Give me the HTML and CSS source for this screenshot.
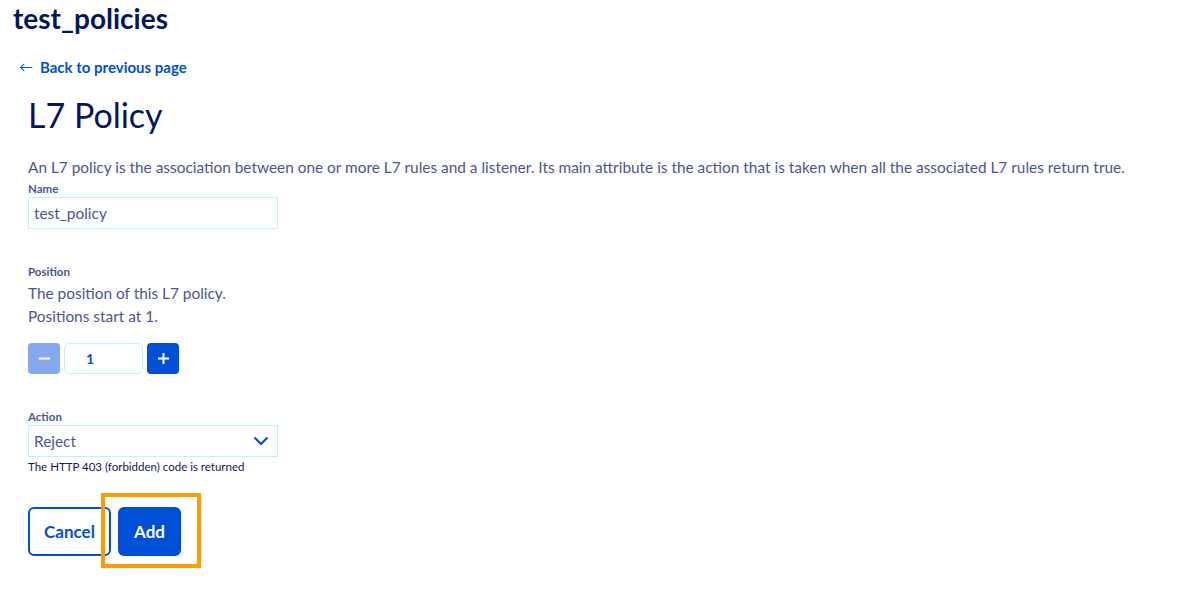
FILE: index.html
```html
<!DOCTYPE html>
<html lang="en">
<head>
    <meta charset="UTF-8">
    <meta name="viewport" content="width=device-width, initial-scale=1.0">
    <title>test_policies - L7 Policy</title>
    <link rel="stylesheet" href="styles.css">
</head>
<body>
    <div id="app">
        <h1 class="page-title">test_policies</h1>
        <a href="#" class="back-link"><span class="back-arrow">&larr;</span>Back to previous page</a>

        <div class="policy-form">
            <h2 class="form-title">L7 Policy</h2>
            <p class="intro">An L7 policy is the association between one or more L7 rules and a listener. Its main attribute is the action that is taken when all the associated L7 rules return true.</p>

            <div class="field">
                <label class="field-label" for="name">Name</label>
                <input type="text" id="name" class="text-input" value="test_policy">
            </div>

            <div class="field field-position">
                <label class="field-label">Position</label>
                <p class="field-desc">The position of this L7 policy.</p>
                <p class="field-desc">Positions start at 1.</p>
                <div class="stepper">
                    <button class="step-btn disabled" disabled>
                        <svg width="13" height="13" viewBox="0 0 13 13"><path d="M1 6.5h11" stroke="#fff" stroke-width="2"/></svg>
                    </button>
                    <input type="text" class="step-value" value="1">
                    <button class="step-btn">
                        <svg width="13" height="13" viewBox="0 0 13 13"><path d="M1 6.5h11M6.5 1v11" stroke="#fff" stroke-width="2"/></svg>
                    </button>
                </div>
            </div>

            <div class="field field-action">
                <label class="field-label" for="action">Action</label>
                <div class="select-box">
                    <span class="select-value">Reject</span>
                    <svg class="chevron" width="16" height="10" viewBox="0 0 16 10"><path d="M1.5 1.5l6.5 6.5 6.5-6.5" fill="none" stroke="#0050d7" stroke-width="2.2"/></svg>
                </div>
                <p class="help">The HTTP 403 (forbidden) code is returned</p>
            </div>

            <div class="actions">
                <button class="btn btn-outline">Cancel</button>
                <div class="highlight-wrap">
                    <button class="btn btn-primary">Add</button>
                    <span class="highlight"></span>
                </div>
            </div>
        </div>
    </div>
</body>
</html>
```

FILE: styles.css
```css
body {
    font-family: Lato, "Open Sans", sans-serif;
    margin: 0;
    padding: 0;
    background-color: #fff;
    color: #4d5592;
}

#app {
    padding: 0 13px 40px;
}

.page-title {
    margin: 0;
    padding-top: 2px;
    font-size: 28px;
    line-height: 32px;
    font-weight: 700;
    color: #00185e;
}

.back-link {
    display: inline-flex;
    align-items: center;
    margin: 23px 0 0 6px;
    font-size: 15px;
    line-height: 20px;
    font-weight: 700;
    color: #0050d7;
    text-decoration: none;
}

.back-arrow {
    font-weight: 400;
    font-size: 14px;
    margin-right: 7px;
}

.policy-form {
    padding-left: 15px;
}

.form-title {
    margin: 16px 0 0;
    font-size: 34px;
    line-height: 44px;
    font-weight: 400;
    color: #00185e;
}

.intro {
    margin: 20px 0 0;
    font-size: 15.4px;
    line-height: 20px;
}

.field-label {
    display: block;
    font-size: 11.5px;
    line-height: 14px;
    font-weight: 700;
}

.field {
    margin-top: 5px;
}

.text-input {
    display: block;
    width: 250px;
    height: 32px;
    margin-top: 1px;
    padding: 0 5px;
    box-sizing: border-box;
    border: 1px solid #bef1ff;
    font-family: inherit;
    font-size: 15.4px;
    color: #4d5592;
    outline: none;
}

.field-position {
    margin-top: 36px;
}

.field-desc {
    margin: 4px 0 0;
    font-size: 15.4px;
    line-height: 20px;
}

.field-desc + .field-desc {
    margin-top: 3px;
}

.stepper {
    display: flex;
    gap: 4px;
    margin-top: 17px;
}

.step-btn {
    width: 32px;
    height: 31px;
    padding: 0;
    border: none;
    border-radius: 4px;
    background-color: #0050d7;
    display: flex;
    align-items: center;
    justify-content: center;
    cursor: pointer;
}

.step-btn.disabled {
    background-color: #85a8ef;
    cursor: default;
}

.step-value {
    width: 79px;
    height: 31px;
    box-sizing: border-box;
    border: 1px solid #bef1ff;
    border-radius: 5px;
    padding: 0 0 0 21px;
    font-family: inherit;
    font-size: 14px;
    font-weight: 700;
    color: #0050d7;
    outline: none;
}

.field-action {
    margin-top: 36px;
}

.select-box {
    width: 250px;
    height: 32px;
    margin-top: 1px;
    box-sizing: border-box;
    border: 1px solid #bef1ff;
    display: flex;
    align-items: center;
    justify-content: space-between;
    padding: 0 8px 0 5px;
}

.select-value {
    font-size: 15.4px;
}

.help {
    margin: 3px 0 0;
    font-size: 11.5px;
    line-height: 14px;
    color: #14145e;
}

.actions {
    display: flex;
    gap: 7px;
    margin-top: 33px;
}

.btn {
    height: 49px;
    border-radius: 6px;
    font-family: inherit;
    font-size: 17px;
    font-weight: 700;
    cursor: pointer;
}

.btn-outline {
    width: 83px;
    background-color: #fff;
    border: 2px solid #0050d7;
    color: #0050d7;
}

.btn-primary {
    width: 63px;
    background-color: #0050d7;
    border: none;
    color: #fff;
}

.highlight-wrap {
    position: relative;
}

.highlight {
    position: absolute;
    left: -17px;
    top: -14px;
    width: 100px;
    height: 75px;
    box-sizing: border-box;
    border: 4px solid #ff9a00;
    pointer-events: none;
}
```
